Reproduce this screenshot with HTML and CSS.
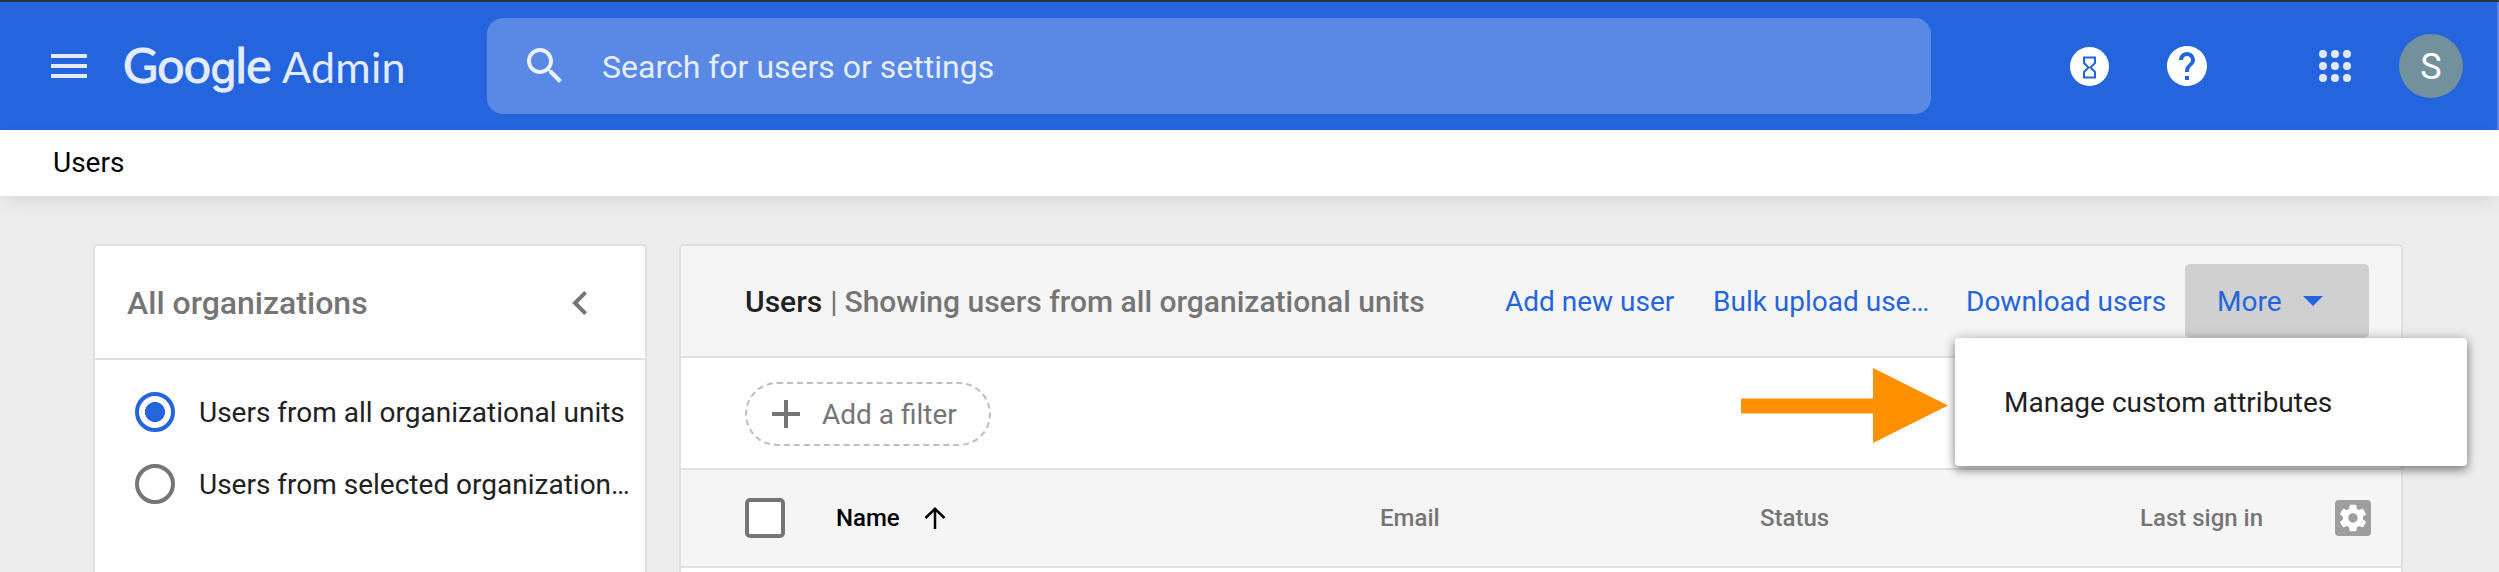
FILE: index.html
```html
<!DOCTYPE html>
<html lang="en">
<head>
<meta charset="utf-8">
<title>Google Admin - Users</title>
<link rel="stylesheet" href="styles.css">
</head>
<body>
<header class="topbar">
  <svg class="menu-icon" width="36" height="24" viewBox="0 0 36 24"><path d="M0 0h36v4H0zM0 10h36v4H0zM0 20h36v4H0z"/></svg>
  <div class="logo"><span class="logo-google">Goo<span class="logo-g">g</span>le</span><span class="logo-admin">Admin</span></div>
  <div class="search">
    <svg class="search-icon" width="48" height="48" viewBox="0 0 24 24"><path d="M15.5 14h-.79l-.28-.27C15.41 12.59 16 11.11 16 9.5 16 5.91 13.09 3 9.5 3S3 5.91 3 9.5 5.91 16 9.5 16c1.61 0 3.09-.59 4.23-1.57l.27.28v.79l5 4.99L20.49 19l-4.99-5zm-6 0C7.01 14 5 11.99 5 9.5S7.01 5 9.5 5 14 7.01 14 9.5 11.99 14 9.5 14z"/></svg>
    <span class="search-text">Search for users or settings</span>
  </div>
  <svg class="tasks-icon" width="39" height="39" viewBox="0 0 39 39"><circle cx="19.500" cy="19.500" r="19.500" fill="#fff"/><path d="M14 10.500h11v5.500l-4.500 4.500 4.500 4.500v5.500H14V25l4.500-4.500L14 16z" fill="none" stroke="#2465de" stroke-width="2"/></svg>
  <svg class="help-icon" width="48" height="48" viewBox="0 0 24 24"><path fill="#fff" d="M12 2C6.480 2 2 6.480 2 12s4.480 10 10 10 10-4.480 10-10S17.520 2 12 2zm1 17h-2v-2h2v2zm2.070-7.750l-.9.920C13.450 12.900 13 13.500 13 15h-2v-.5c0-1.100.450-2.100 1.170-2.830l1.240-1.260c.370-.360.590-.860.590-1.410 0-1.100-.9-2-2-2s-2 .9-2 2H8c0-2.210 1.790-4 4-4s4 1.790 4 4c0 .880-.360 1.680-.930 2.250z"/></svg>
  <svg class="apps-icon" width="32" height="32" viewBox="0 0 32 32"><circle cx="4" cy="4" r="4"/><circle cx="16" cy="4" r="4"/><circle cx="28" cy="4" r="4"/><circle cx="4" cy="16" r="4"/><circle cx="16" cy="16" r="4"/><circle cx="28" cy="16" r="4"/><circle cx="4" cy="28" r="4"/><circle cx="16" cy="28" r="4"/><circle cx="28" cy="28" r="4"/></svg>
  <div class="avatar">S</div>
</header>
<nav class="breadcrumb"><span>Users</span></nav>
<main class="content">
  <aside class="card org-card">
    <div class="org-head">
      <span class="org-title">All organizations</span>
      <svg class="chevron" width="15" height="24" viewBox="0 0 15 24"><path d="M13.600 1.400L3 12l10.600 10.600" fill="none" stroke="#757575" stroke-width="4"/></svg>
    </div>
    <div class="org-options">
      <div class="option"><i class="radio radio-on"></i><span class="option-text">Users from all organizational units</span></div>
      <div class="option"><i class="radio"></i><span class="option-text">Users from selected organization…</span></div>
    </div>
  </aside>
  <section class="card users-card">
    <div class="users-head">
      <div class="users-title"><b>Users</b><span class="bar">|</span><span class="showing">Showing users from all organizational units</span></div>
      <a class="link link-add">Add new user</a>
      <a class="link link-bulk">Bulk upload use…</a>
      <a class="link link-download">Download users</a>
      <div class="more">
        <span class="more-text">More</span>
        <svg class="caret" width="20" height="10" viewBox="0 0 20 10"><path d="M0 0h20L10 10z" fill="#2465de"/></svg>
        <div class="menu"><span>Manage custom attributes</span></div>
      </div>
    </div>
    <div class="filter-row">
      <div class="filter">
        <svg width="28" height="28" viewBox="0 0 28 28"><path d="M12 0h4v12h12v4H16v12h-4V16H0v-4h12z" fill="#757575"/></svg>
        <span>Add a filter</span>
      </div>
      <svg class="pointer" width="207" height="75" viewBox="0 0 207 75"><path d="M0 30.500h132V0l75 37.500L132 75V45.500H0z" fill="#ff9100"/></svg>
    </div>
    <div class="table-head">
      <i class="checkbox"></i>
      <div class="col col-name">Name
        <svg class="sort" width="22" height="22" viewBox="0 0 22 22"><path d="M11 22V1.800M1.500 11L11 1.800 20.500 11" fill="none" stroke="#000" stroke-width="2.500"/></svg>
      </div>
      <div class="col col-email">Email</div>
      <div class="col col-status">Status</div>
      <div class="col col-last">Last sign in</div>
      <div class="gear"><svg width="32" height="32" viewBox="0 0 24 24"><path fill="#fff" d="M19.430 12.980c.040-.320.070-.640.070-.980s-.030-.660-.070-.980l2.110-1.650c.190-.150.240-.420.120-.640l-2-3.460c-.120-.220-.390-.3-.610-.220l-2.490 1c-.520-.4-1.080-.730-1.690-.980l-.380-2.650C14.460 2.180 14.250 2 14 2h-4c-.250 0-.460.180-.490.420l-.380 2.650c-.610.250-1.170.590-1.690.980l-2.490-1c-.230-.090-.490 0-.610.220l-2 3.460c-.130.220-.070.490.120.640l2.110 1.650c-.040.320-.070.650-.070.980s.030.660.070.980l-2.110 1.650c-.190.150-.240.420-.120.640l2 3.460c.120.220.390.3.610.220l2.490-1c.520.4 1.080.730 1.690.980l.380 2.650c.030.240.240.420.490.420h4c.250 0 .460-.180.490-.420l.380-2.650c.610-.250 1.170-.590 1.690-.980l2.490 1c.230.090.490 0 .610-.220l2-3.460c.120-.220.070-.490-.120-.640l-2.110-1.650zM12 15.500c-1.930 0-3.500-1.570-3.500-3.500s1.570-3.500 3.500-3.500 3.500 1.570 3.500 3.500-1.570 3.500-3.500 3.500z"/></svg></div>
    </div>
  </section>
</main>
</body>
</html>
```
FILE: styles.css
```css
* { box-sizing: border-box; }
body {
  margin: 0;
  height: 572px;
  overflow: hidden;
  display: flex;
  flex-direction: column;
  background: #ededed;
  font-family: Roboto, "Liberation Sans", sans-serif;
  font-size: 28px;
  color: #212121;
  white-space: nowrap;
}
svg { display: block; flex: none; }

.topbar {
  flex: none;
  height: 130px;
  border-top: 2px solid #2b343b;
  background: #2465de;
  display: flex;
  align-items: center;
  padding-left: 51px;
  box-shadow: inset -2px 0 #5887e4;
}
.menu-icon, .apps-icon { fill: #e2eafb; }
.logo {
  width: 400px;
  padding-left: 36px;
  display: flex;
  align-items: baseline;
  font-family: Lato, sans-serif;
  color: #e4ebfb;
  line-height: 64px;
}
.logo-google {
  font-size: 48px;
  width: 159px;
  letter-spacing: -.6px;
  -webkit-text-stroke: 1px #e4ebfb;
}
.logo-g { font-family: Inter, sans-serif; font-size: 42px; line-height: 1; }
.logo-admin { font-size: 43px; letter-spacing: .3px; }
.search {
  width: 1444px;
  height: 96px;
  border-radius: 16px;
  background: #5988e5;
  display: flex;
  align-items: center;
  padding-left: 34px;
}
.search-icon { fill: #e9f0fc; }
.search-text { margin-left: 33px; padding-top: 1px; font-size: 32px; color: #e7eefb; }
.tasks-icon { margin-left: 139px; }
.help-icon { margin-left: 54px; }
.apps-icon { margin-left: 108px; }
.avatar {
  margin-left: 48px;
  width: 64px;
  height: 64px;
  border-radius: 50%;
  background: #72919d;
  color: #fff;
  font-size: 36px;
  line-height: 66px;
  text-align: center;
}

.breadcrumb {
  flex: none;
  height: 66px;
  background: #fff;
  color: #000;
  padding-left: 53px;
  line-height: 65px;
  box-shadow: 0 8px 20px -4px rgba(0, 0, 0, .1);
}

.content { flex: 1; display: flex; gap: 32px; padding: 48px 0 0 93px; }
.card {
  border: 2px solid #e0e0e0;
  border-bottom: 0;
  border-radius: 5px 5px 0 0;
  background: #fff;
  flex: none;
}
.org-card { width: 554px; }
.org-head {
  height: 114px;
  border-bottom: 2px solid #e0e0e0;
  display: flex;
  justify-content: space-between;
  align-items: center;
  padding: 1px 58px 0 32px;
}
.org-title { font-size: 32px; font-weight: 500; color: #757575; }
.org-options { padding: 32px 0 0 40px; display: flex; flex-direction: column; gap: 32px; }
.option { height: 40px; display: flex; align-items: center; gap: 24px; }
.radio { width: 40px; height: 40px; border: 4px solid #757575; border-radius: 50%; flex: none; }
.radio-on { border-color: #2465de; background: radial-gradient(circle, #2465de 9.7px, #fff 10.3px); }

.users-card { width: 1724px; }
.users-head {
  height: 112px;
  border-bottom: 2px solid #e0e0e0;
  background: #f5f5f5;
  border-radius: 3px 3px 0 0;
  display: flex;
  align-items: center;
  padding: 0 0 0 64px;
  line-height: 76px;
}
.users-title { width: 760px; padding-top: 1px; font-size: 30px; font-weight: 500; color: #757575; }
.users-title b { font-weight: 500; color: #212121; }
.bar { margin: 0 7px 0 8px; font-weight: 400; }
.link, .more-text { color: #2465de; padding-top: 2px; }
.link-add { width: 208px; }
.link-bulk { width: 253px; }
.link-download { width: 219px; }
.more {
  position: relative;
  width: 184px;
  height: 74px;
  border-radius: 5px;
  background: #d0d0d0;
  padding-left: 32px;
  display: flex;
  align-items: center;
}
.more-text { width: 86px; }
.menu {
  position: absolute;
  top: 74px;
  left: -230px;
  width: 512px;
  height: 128px;
  background: #fff;
  border-radius: 4px;
  padding-left: 49px;
  line-height: 129px;
  z-index: 2;
  box-shadow: 0 4px 10px rgba(0, 0, 0, .42), 0 0 14px rgba(0, 0, 0, .16);
}

.filter-row { height: 112px; border-bottom: 2px solid #e0e0e0; display: flex; padding: 10px 0 0 64px; }
.filter {
  width: 246px;
  height: 64px;
  margin-top: 14px;
  border: 2px dashed #bdbdbd;
  border-radius: 32px;
  display: flex;
  align-items: center;
  padding-left: 25px;
  gap: 22px;
  color: #757575;
}
.pointer { margin-left: 750px; }

.table-head {
  height: 98px;
  border-bottom: 2px solid #e0e0e0;
  background: #f5f5f5;
  display: flex;
  align-items: center;
  padding-left: 64px;
  font-size: 24px;
  font-weight: 500;
  color: #757575;
}
.checkbox { width: 40px; height: 40px; border: 4px solid #757575; border-radius: 5px; background: #fff; }
.col-name { width: 544px; margin-left: 51px; color: #000; display: flex; align-items: center; gap: 24px; }
.col-email { width: 380px; }
.col-status { width: 380px; }
.col-last { width: 195px; }
.gear { width: 36px; height: 36px; border-radius: 4px; background: #9e9e9e; display: grid; place-items: center; }
```
